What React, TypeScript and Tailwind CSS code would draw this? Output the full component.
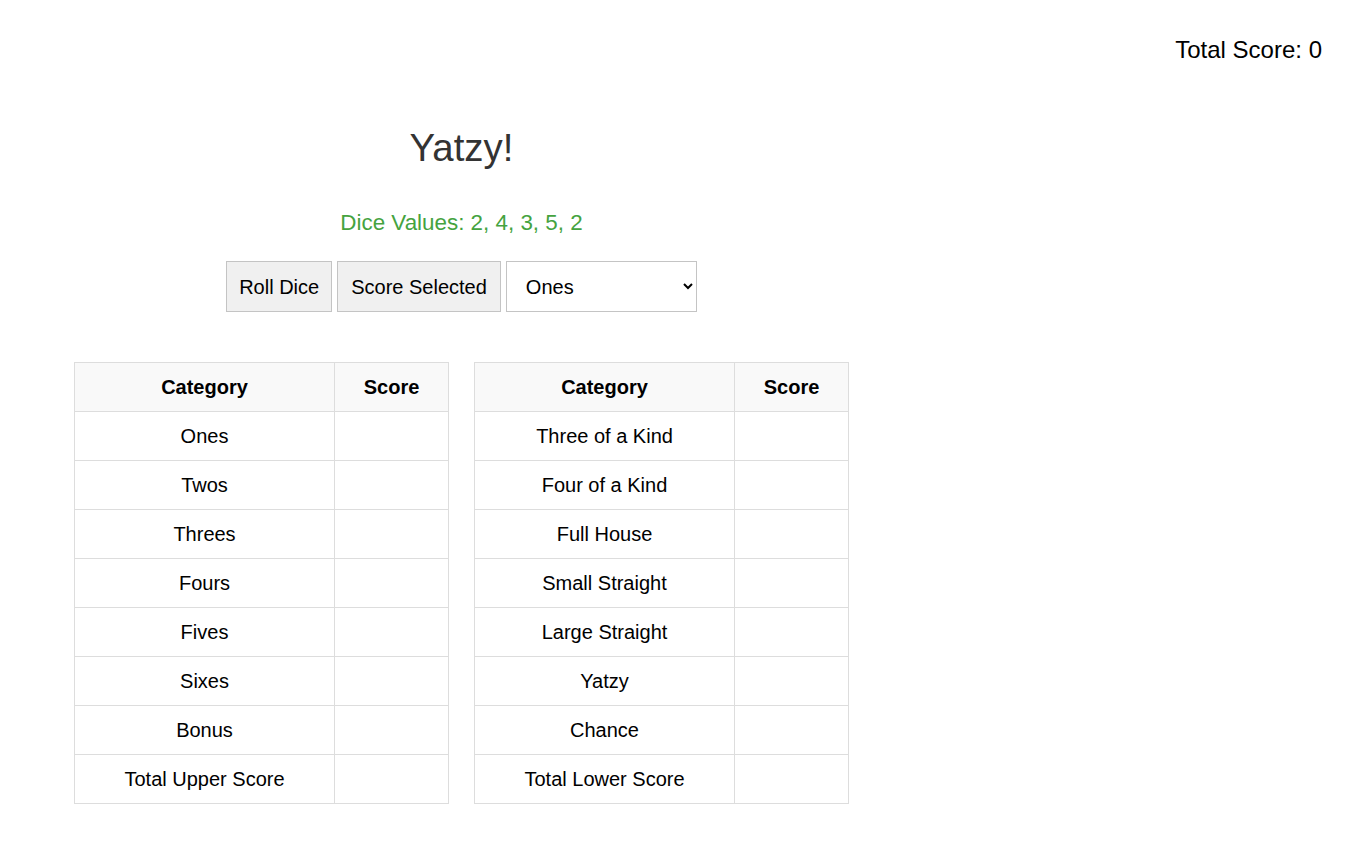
import React, { useState } from "react";

const upper = ["Ones", "Twos", "Threes", "Fours", "Fives", "Sixes", "Bonus", "Total Upper Score"];
const lower = [
  "Three of a Kind",
  "Four of a Kind",
  "Full House",
  "Small Straight",
  "Large Straight",
  "Yatzy",
  "Chance",
  "Total Lower Score",
];

function ScoreTable({ rows }: { rows: string[] }) {
  return (
    <table className="w-[375px] border-collapse text-[20px] text-black">
      <thead>
        <tr className="bg-[#f9f9f9]">
          <th className="w-[260px] border border-[#dddddd] py-3 leading-6 font-bold">Category</th>
          <th className="border border-[#dddddd] py-3 leading-6 font-bold">Score</th>
        </tr>
      </thead>
      <tbody>
        {rows.map((r) => (
          <tr key={r}>
            <td className="border border-[#dddddd] py-3 text-center leading-6">{r}</td>
            <td className="border border-[#dddddd] py-3 leading-6"></td>
          </tr>
        ))}
      </tbody>
    </table>
  );
}

export default function App() {
  const [category, setCategory] = useState("Ones");

  return (
    <div className="min-h-screen bg-white font-['Liberation_Sans',Arial,sans-serif] text-[#333]">
      <div className="flex justify-end pt-[36px] pr-[36px]">
        <span className="text-[24px] leading-7 text-black">Total Score: 0</span>
      </div>
      <div className="ml-[74px] w-[775px] pt-[61px]">
        <h1 className="text-center text-[38.4px] leading-[46px]">Yatzy!</h1>
        <p className="mt-[39px] text-center text-[22.4px] leading-[26px] text-[#45a33f]">
          Dice Values: 2, 4, 3, 5, 2
        </p>
        <div className="mt-[25px] flex justify-center gap-[5px]">
          <button className="h-[51px] border border-[#c4c4c4] bg-[#f0f0f0] px-[12px] text-[20px] text-black">
            Roll Dice
          </button>
          <button className="h-[51px] border border-[#c4c4c4] bg-[#f0f0f0] px-[13px] text-[20px] text-black">
            Score Selected
          </button>
          <select
            value={category}
            onChange={(e) => setCategory(e.target.value)}
            className="h-[51px] w-[191px] border border-[#c4c4c4] bg-white pl-[15px] pr-[6px] text-[20px] text-black"
          >
            {[...upper.slice(0, 6), ...lower.slice(0, 7)].map((c) => (
              <option key={c}>{c}</option>
            ))}
          </select>
        </div>
        <div className="mt-[50px] flex gap-[25px]">
          <ScoreTable rows={upper} />
          <ScoreTable rows={lower} />
        </div>
      </div>
    </div>
  );
}
